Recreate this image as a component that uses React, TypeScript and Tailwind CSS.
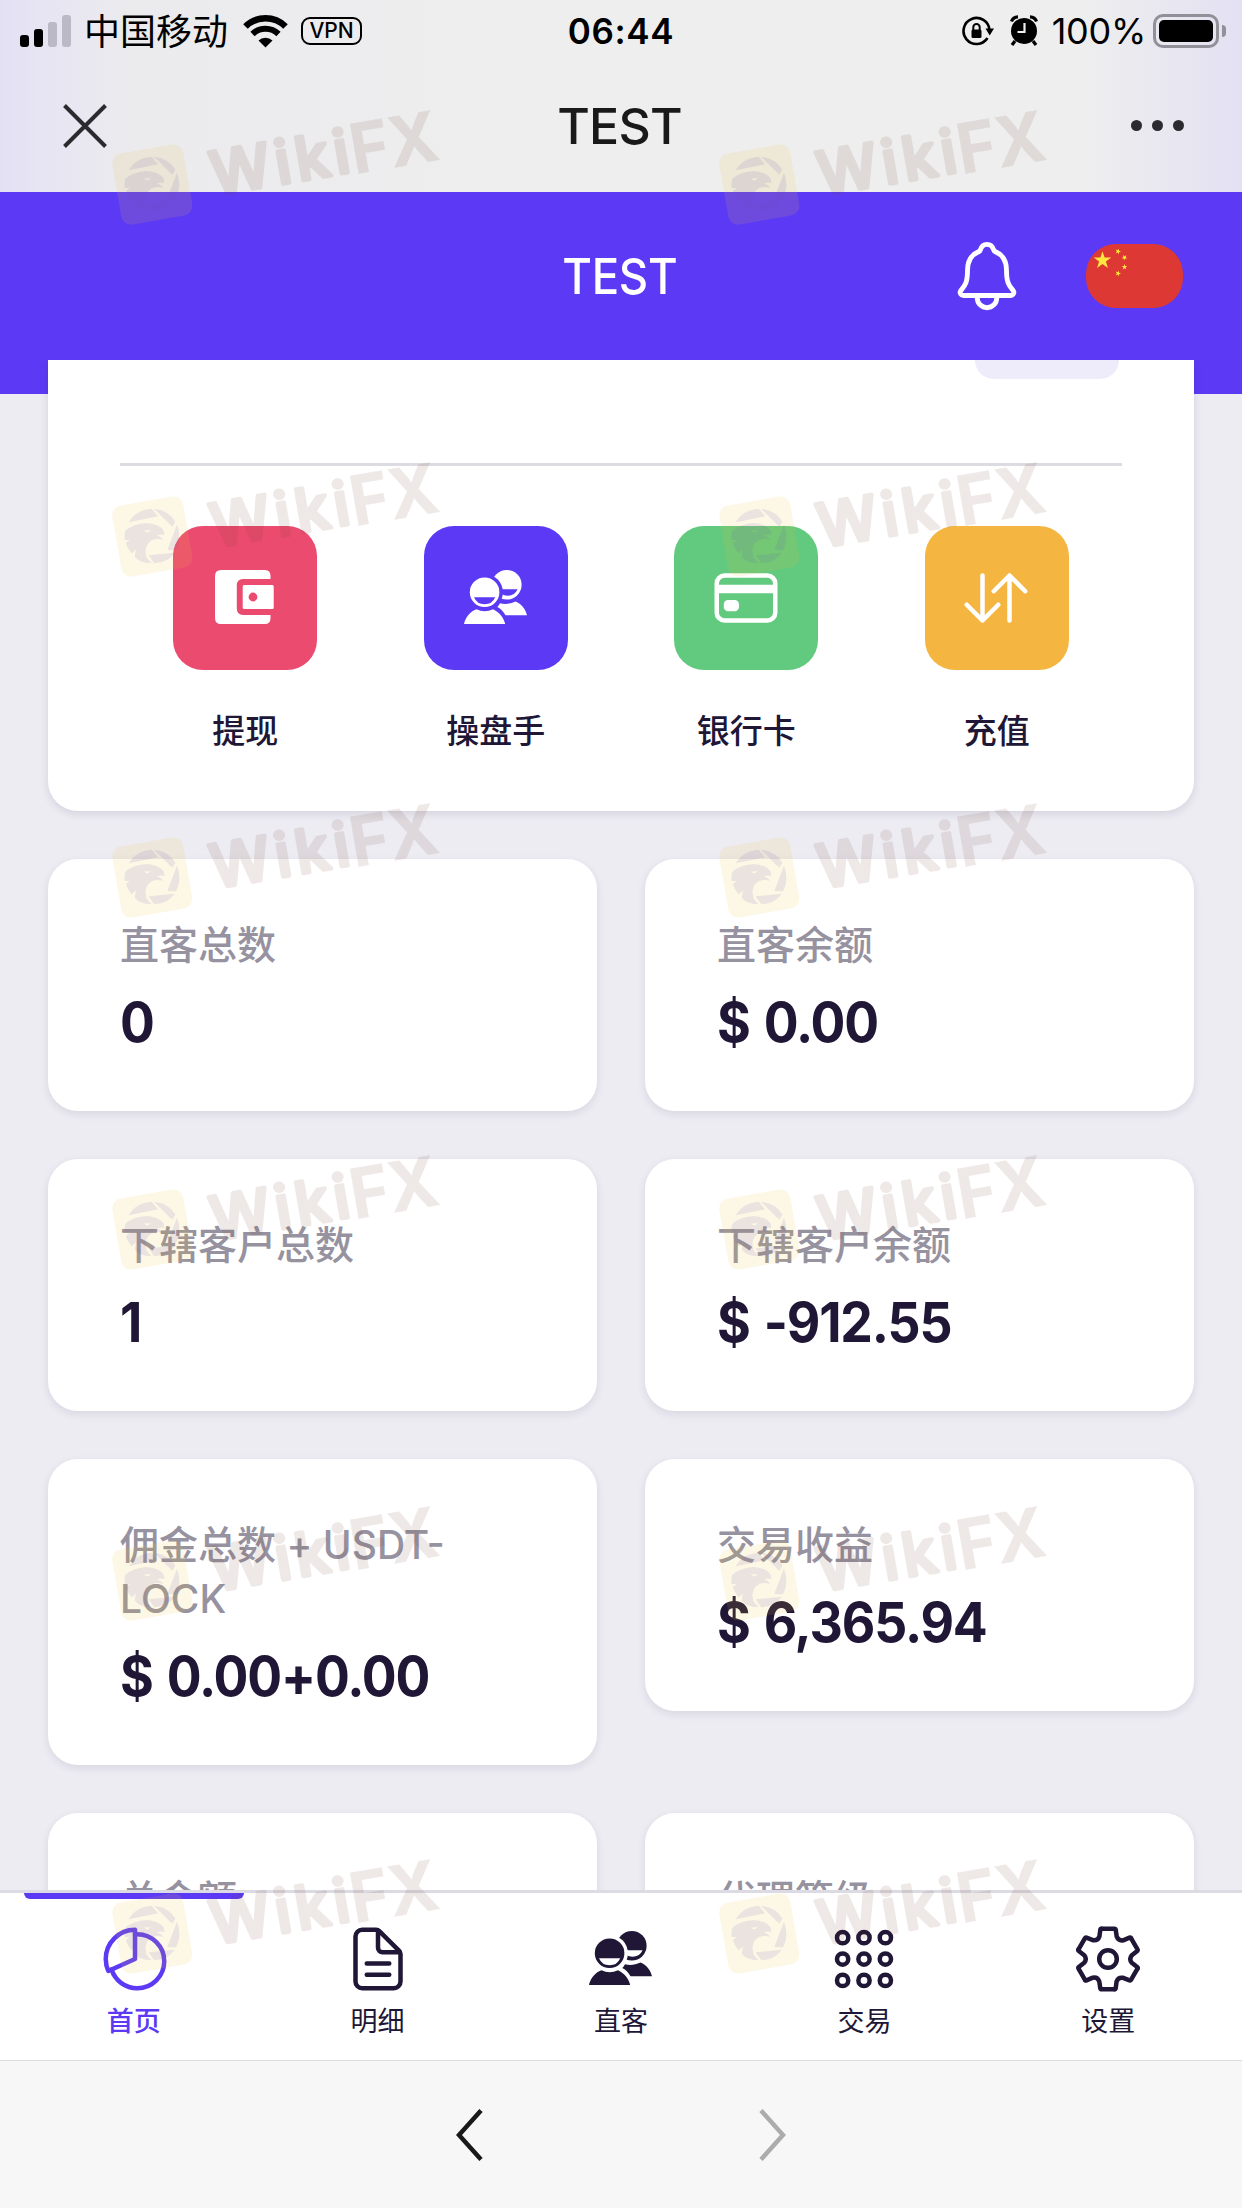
import type { ReactNode } from "react";
import {
  IoAppsOutline,
  IoCardOutline,
  IoDocumentTextOutline,
  IoNotificationsOutline,
  IoPieChartOutline,
  IoSwapVerticalOutline,
} from "react-icons/io5";

const stats = [
  { label: ["直客总数"], value: "0" },
  { label: ["直客余额"], value: "$ 0.00" },
  { label: ["下辖客户总数"], value: "1" },
  { label: ["下辖客户余额"], value: "$ -912.55" },
  { label: ["佣金总数 + USDT-", "LOCK"], value: "$ 0.00+0.00" },
  { label: ["交易收益"], value: "$ 6,365.94" },
  { label: ["总金额"], value: "$ 0.00" },
  { label: ["代理等级"], value: "1" },
];

const WalletIcon = () => (
  <svg className="mb-[2px] mr-[2px]" width="59" height="54" viewBox="0 0 59 54" fill="currentColor">
    <path d="M6 0H50Q55.500 0 55.500 6V9H28Q21.800 9 21.800 15.500V38.500Q21.800 45 28 45H55.500V48Q55.500 54 50 54H6Q0 54 0 48V6Q0 0 6 0Z" />
    <path
      fillRule="evenodd"
      d="M29 15H57.500Q58.700 15 58.700 16.500V37.500Q58.700 39 57.500 39H29Q27.700 39 27.700 37.500V16.500Q27.700 15 29 15ZM38 22.600A4.400 4.400 0 1 0 38 31.400A4.400 4.400 0 1 0 38 22.600Z"
    />
  </svg>
);

const PeopleIcon = () => (
  <svg className="mb-[3px]" width="63" height="54" viewBox="0 0 63 54" fill="currentColor">
    <mask id="people-back">
      <rect width="63" height="54" fill="#fff" />
      <circle cx="20.600" cy="22.300" r="18.300" fill="#000" />
      <path d="M32 19.200H53.600A11 11 0 0 1 33.500 19.200Z" fill="#000" />
    </mask>
    <g mask="url(#people-back)">
      <circle cx="42.800" cy="14.800" r="14.800" />
    </g>
    <path d="M36 33.200C41 34.500 46 34 51.500 31.500C57.500 34 61.500 39 63 45.200H41.500C39.500 41.500 37 39 33.300 37Q35 35.300 36 33.200Z" />
    <path
      fillRule="evenodd"
      d="M20.600 7.500A14.800 14.800 0 1 1 20.600 37.100A14.800 14.800 0 1 1 20.600 7.500ZM10 27.300A11.500 11.500 0 0 0 31.200 27.300Z"
    />
    <path d="M0 54C1.500 47.500 6 41.500 12.500 39.300Q20.600 43.200 29 39.300C35.500 42.500 39.500 47.500 41.200 54Z" />
  </svg>
);

const GearIcon = () => (
  <svg
    width="72"
    height="72"
    viewBox="-36 -36 72 72"
    fill="none"
    stroke="currentColor"
    strokeWidth="4.500"
    strokeLinejoin="round"
    strokeLinecap="round"
  >
    <circle r="8.800" />
    {[0, 60, 120, 180, 240, 300].map((deg) => (
      <path
        key={deg}
        transform={`rotate(${deg})`}
        d="M-6.500 -30.300H6.500Q7.500 -30.300 7.700 -29.300L8.700 -22.500Q10.500 -17.800 15.200 -18.700L21.500 -21.300Q22.500 -21.700 23 -20.800"
      />
    ))}
  </svg>
);

const Flag = () => {
  const star = "M0 -10L2.300 -3.200H9.500L3.700 1.100L5.900 8.100L0 3.900L-5.900 8.100L-3.700 1.100L-9.500 -3.200H-2.300Z";
  return (
    <svg
      width="97"
      height="64"
      viewBox="0 0 97 64"
      className="rounded-[30px] bg-[#de3834]"
      fill="#ffe83d"
    >
      <path d={star} transform="translate(16.500 16.500) scale(.92)" />
      <path d={star} transform="translate(32 7.500) rotate(20) scale(.3)" />
      <path d={star} transform="translate(38.500 13.500) rotate(40) scale(.3)" />
      <path d={star} transform="translate(38.500 23) scale(.3)" />
      <path d={star} transform="translate(32 29.500) rotate(20) scale(.3)" />
    </svg>
  );
};

const StatusBar = () => (
  <div className="grid h-[60px] grid-cols-[1fr_auto_1fr] px-5 text-black">
    <div className="flex items-center">
      <div className="flex h-8 items-end gap-[5px]">
        <span className="h-3 w-[9px] rounded-[3px] bg-black" />
        <span className="h-[18px] w-[9px] rounded-[3px] bg-black" />
        <span className="h-[25px] w-[9px] rounded-[3px] bg-[#bbb9c5]" />
        <span className="h-8 w-[9px] rounded-[3px] bg-[#bbb9c5]" />
      </div>
      <span className="ml-[13px] pt-[3px] text-[36px] leading-[58px]">中国移动</span>
      <svg className="ml-[15px]" width="45" height="34" viewBox="0 0 45 34" fill="none" stroke="#000">
        <path d="M2.500 12.500A28.500 28.500 0 0 1 42.500 12.500" strokeWidth="6.500" />
        <path d="M9.500 20A18.500 18.500 0 0 1 35.500 20" strokeWidth="6" />
        <path d="M15.500 26.500A10 10 0 0 1 29.500 26.500L22.500 33.500Z" fill="#000" stroke="none" />
      </svg>
      <span className="ml-[13px] flex h-7 w-[61px] items-center justify-center rounded-[9px] border-[2.5px] border-black text-[21px] font-medium leading-none">
        VPN
      </span>
    </div>
    <span className="pt-px text-[35px] font-semibold leading-[60px] tracking-[0.6px]">06:44</span>
    <div className="-mr-1 flex items-center justify-end">
      <svg className="mr-[16px]" width="32" height="32" viewBox="0 0 32 32" fill="none" stroke="#000">
        <path d="M25.500 23A13 13 0 1 1 27.500 15" strokeWidth="2.600" />
        <path d="M23.500 13.500H32L27.700 20.500Z" fill="#000" stroke="none" />
        <rect x="9.500" y="14.500" width="10" height="8.500" rx="1.500" fill="#000" stroke="none" />
        <path d="M11.300 15V12.200A3.200 3.200 0 0 1 17.700 12.200V15" strokeWidth="2" />
      </svg>
      <svg className="mr-[14px]" width="28" height="31" viewBox="0 0 28 31">
        <circle cx="14" cy="16" r="13" />
        <path
          d="M1.500 6.500Q3 2 8 1.800M26.500 6.500Q25 2 20 1.800M5 26L2 30M23 26L26 30"
          stroke="#000"
          strokeWidth="3.200"
          fill="none"
        />
        <path d="M14.500 8V17H7.500" stroke="#eee" strokeWidth="2.200" fill="none" />
      </svg>
      <span className="text-[36px] leading-[60px] tracking-[-0.3px]">100%</span>
      <span className="ml-[7px] flex h-[34px] w-[66px] rounded-[10px] border-[3px] border-[#918f98] p-[3px]">
        <span className="flex-1 rounded-[5px] bg-black" />
      </span>
      <span className="ml-[3px] h-3 w-1 rounded-r-full bg-[#918f98]" />
    </div>
  </div>
);

const BrowserHeader = () => (
  <header className="h-[192px] shrink-0 bg-[linear-gradient(90deg,#e3e0f4_0,#e7e4f3_40px,#ebebee_130px,#eeeeee_560px,#eeeeee_1080px,#e8e6f0_1180px,#e3e0f3_1242px)]">
    <StatusBar />
    <div className="grid h-[132px] grid-cols-3 items-center px-[63px] pb-px text-[#191919]">
      <svg width="44" height="44" viewBox="0 0 44 44" stroke="#2b2b2f" strokeWidth="4">
        <path d="M1.500 1.500L42.500 42.500M42.500 1.500L1.500 42.500" />
      </svg>
      <h1 className="pr-[3px] text-center text-[50px] font-medium leading-none tracking-[-0.8px]">TEST</h1>
      <div className="-mr-[5px] flex justify-end gap-[10px]">
        <span className="size-[11px] rounded-full bg-[#2b2b2f]" />
        <span className="size-[11px] rounded-full bg-[#2b2b2f]" />
        <span className="size-[11px] rounded-full bg-[#2b2b2f]" />
      </div>
    </div>
  </header>
);

const Action = ({ color, label, children }: { color: string; label: string; children: ReactNode }) => (
  <div className="flex flex-col items-center">
    <div className={`flex size-36 items-center justify-center rounded-[30px] text-white ${color}`}>
      {children}
    </div>
    <span className="mt-[37px] text-[33px] font-medium leading-[48px] text-[#201636]">{label}</span>
  </div>
);

const StatCard = ({ label, value }: { label: string[]; value: string }) => (
  <div className="rounded-[30px] bg-white px-[72px] pb-[49px] pt-[59px] shadow-[0_3px_9px_rgba(32,22,60,0.10)]">
    {label.map((line) => (
      <p key={line} className="whitespace-nowrap text-[39px] font-medium leading-[54px] text-[#96929f]">
        {line}
      </p>
    ))}
    <p className="mt-[11px] origin-left scale-x-[.94] whitespace-nowrap text-[55px] font-bold leading-[79px] tracking-[-1.2px] text-[#201636] [word-spacing:3px]">
      {value}
    </p>
  </div>
);

const NavItem = ({ label, active, children }: { label: string; active?: boolean; children: ReactNode }) => (
  <div
    className={`flex flex-col items-center text-[27px] ${
      active ? "font-medium text-[#5c3af5]" : "text-[#201636]"
    }`}
  >
    <span className={`h-[6px] w-[220px] rounded-b-[6px] ${active ? "bg-[#5c3af5]" : ""}`} />
    <span className="mt-[24px] flex h-[72px] items-center">{children}</span>
    <span className="mt-[7px] leading-10">{label}</span>
  </div>
);

const watermarkRows = [0, 352, 693, 1045, 1396, 1749];

// Repeated brand mark laid over the whole screen
const Watermark = () => (
  <svg className="pointer-events-none absolute inset-0" width="1242" height="2208">
    {watermarkRows.map((y) =>
      [0, 607].map((x) => (
        <g key={`${x}-${y}`} transform={`translate(${x} ${y})`}>
          <rect
            x="-36"
            y="-36"
            width="72"
            height="72"
            rx="10"
            transform="translate(152.300 184.500) rotate(-9.800)"
            fill="#f2c33c"
            fillOpacity=".13"
          />
          <g transform="translate(100 100) scale(.3333)" fill="#6450b4" fillOpacity=".12">
            <path d="M86 211Q108 173 155 170L174 193Z" />
            <path d="M162 170Q208 176 226 209L217 224Z" />
            <path d="M231 218Q247 258 228 295L202 294Z" />
            <path d="M146 310L224 302Q204 332 163 334Z" />
            <path
              fillRule="evenodd"
              d="M76 236Q98 217 138 213Q178 215 191 236L193 249Q183 245 171 250Q182 254 190 263Q162 256 148 270Q130 288 140 317L154 333Q122 334 104 314L108 292L96 304Q82 290 78 272L90 264L74 264Q72 250 76 236ZM132 234Q142 237 153 233Q146 243 138 241Z"
            />
          </g>
          <g
            opacity=".11"
            transform="translate(214.500 197.500) rotate(-9.800)"
            className="fill-[#6a3a28] stroke-[#6a3a28]"
          >
            <text
              y="-2"
              textLength="140"
              lengthAdjust="spacing"
              fontSize="60"
              className="font-medium"
              strokeWidth="4"
              strokeLinejoin="round"
            >
              Wiki
            </text>
            <text
              x="142"
              y="1"
              textLength="88"
              lengthAdjust="spacingAndGlyphs"
              fontSize="69"
              className="font-bold"
              strokeWidth="0.500"
            >
              FX
            </text>
          </g>
        </g>
      ))
    )}
  </svg>
);

export default function App() {
  return (
    <div className="relative flex h-[2208px] w-[1242px] flex-col overflow-hidden font-['Inter','Noto_Sans_CJK_SC',sans-serif]">
      <BrowserHeader />

      <div className="grid h-[168px] shrink-0 grid-cols-3 items-center bg-[#5c3af5] pl-[60px] pr-[59px] text-white">
        <span />
        <h2 className="scale-x-[.91] pr-[3px] text-center text-[50px] font-medium leading-none tracking-[-0.3px]">
          TEST
        </h2>
        <div className="flex items-center justify-end gap-[60px]">
          <IoNotificationsOutline size={78} />
          <Flag />
        </div>
      </div>

      <main className="h-[1530px] shrink-0 overflow-hidden bg-[linear-gradient(#5c3af5_34px,#edecf3_34px)] px-12">
        <section className="h-[451px] rounded-b-[30px] bg-white px-[72px] shadow-[0_3px_9px_rgba(32,22,60,0.12)]">
          <div className="flex h-[106px] items-start justify-end border-b-[3px] border-[#dcdbe2] pr-[3px]">
            <span className="h-[19px] w-[144px] rounded-b-[28px] bg-[#eeebfb]" />
          </div>
          <div className="grid grid-cols-4 pt-[60px]">
            <Action color="bg-[#ec4b70]" label="提现">
              <WalletIcon />
            </Action>
            <Action color="bg-[#5c3af5]" label="操盘手">
              <PeopleIcon />
            </Action>
            <Action color="bg-[#62ca7e]" label="银行卡">
              <IoCardOutline size={72} />
            </Action>
            <Action color="bg-[#f4b640]" label="充值">
              <IoSwapVerticalOutline size={72} className="mr-[2px]" />
            </Action>
          </div>
        </section>

        <section className="mt-12 grid grid-cols-2 items-start gap-12">
          {stats.map((stat) => (
            <StatCard key={stat.label[0]} {...stat} />
          ))}
        </section>
      </main>

      <nav className="grid h-[170px] shrink-0 grid-cols-5 border-t-[3px] border-[#dcdbe4] bg-white px-3">
        <NavItem label="首页" active>
          <IoPieChartOutline size={72} className="ml-[3px]" />
        </NavItem>
        <NavItem label="明细">
          <IoDocumentTextOutline size={72} className="ml-px" />
        </NavItem>
        <NavItem label="直客">
          <PeopleIcon />
        </NavItem>
        <NavItem label="交易">
          <IoAppsOutline size={72} className="mr-px" />
        </NavItem>
        <NavItem label="设置">
          <GearIcon />
        </NavItem>
      </nav>

      <footer className="flex flex-1 items-center justify-center gap-[276px] border-t border-[#dedede] bg-[#f7f7f7]">
        <svg width="27" height="52" viewBox="0 0 27 52" fill="none" stroke="#191919" strokeWidth="4.500">
          <path d="M25 1.500L3 26L25 50.500" />
        </svg>
        <svg width="27" height="52" viewBox="0 0 27 52" fill="none" stroke="#acacac" strokeWidth="4.500">
          <path d="M2 1.500L24 26L2 50.500" />
        </svg>
      </footer>

      <Watermark />
    </div>
  );
}
